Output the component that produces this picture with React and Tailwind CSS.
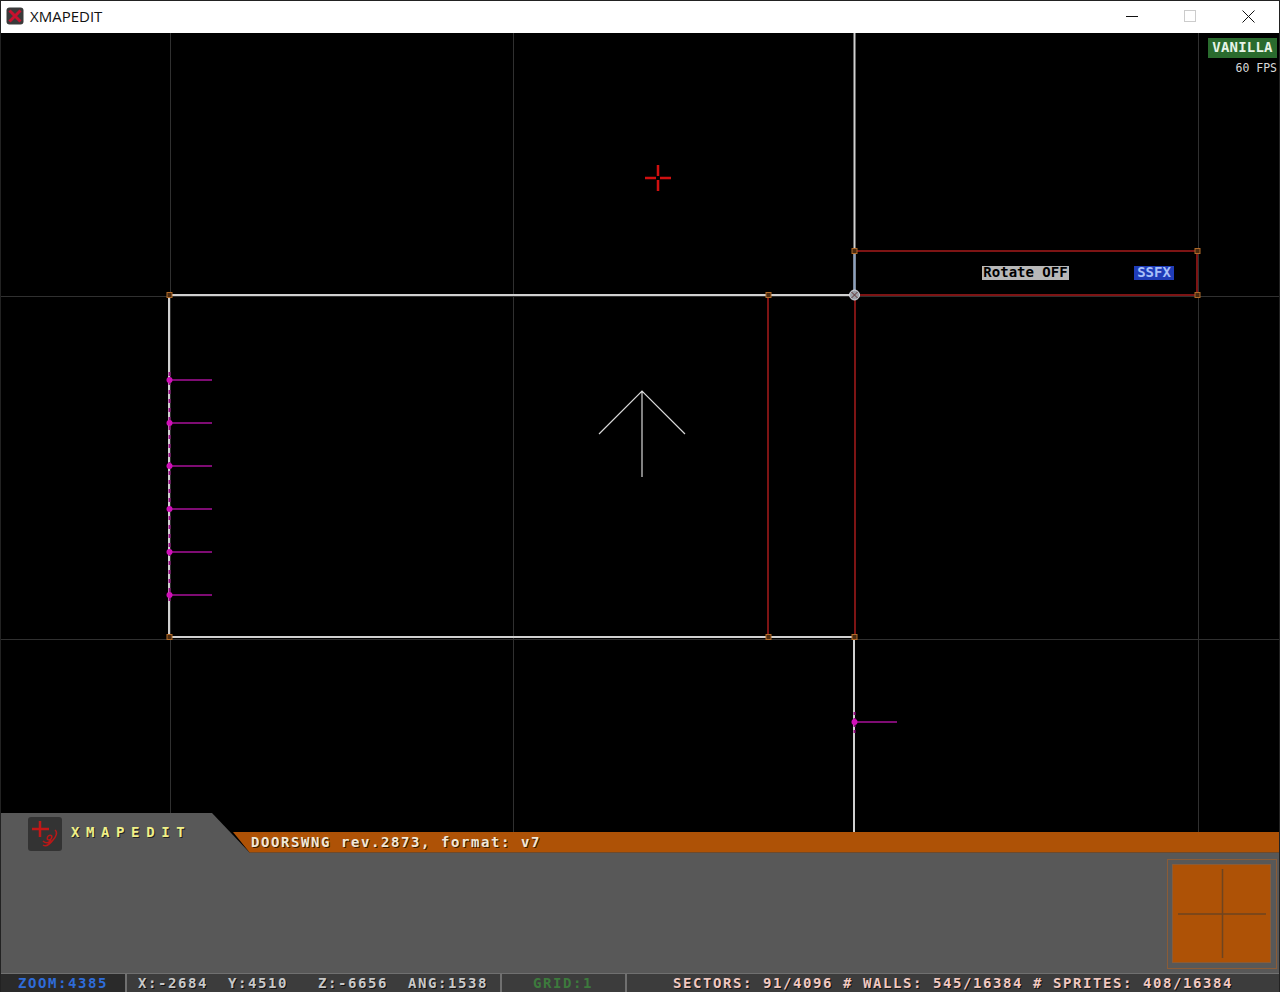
import React from 'react';

const pixelFont = "font-['DejaVu_Sans_Mono',monospace] font-bold";

const vertices = [
  [169, 295],
  [768, 295],
  [854, 251],
  [1197, 251],
  [1197, 295],
  [169, 637],
  [768, 637],
  [854, 637],
];

const markers = [
  [169, 380],
  [169, 423],
  [169, 466],
  [169, 509],
  [169, 552],
  [169, 595],
  [854, 722],
];

const MapDrawing = () => (
  <svg className="block w-full h-full" viewBox="1 33 1278 799">
    <g stroke="#303030" strokeWidth="1">
      <path d="M170.5 33V832M513.5 33V832M1198.5 33V832M0 296.5H1280M0 639.5H1280" fill="none" />
    </g>
    <g stroke="#d0d0d0" strokeWidth="2" fill="none">
      <path d="M169 295H854M169 295V637H854V832M854.5 33V295" />
    </g>
    <g stroke="#7d1414" strokeWidth="2" fill="none">
      <path d="M768 295V637M855 295V637M854 251H1197V295H854" />
    </g>
    <path d="M854.5 251V295" stroke="#8aa0c0" strokeWidth="2" />
    <path d="M642 477V391M599 434L642 391L685 434" stroke="#d8d8d8" strokeWidth="1.2" fill="none" />
    <path d="M645 178H656M660 178H671M658 165V176M658 180V191" stroke="#d01010" strokeWidth="2.5" fill="none" />
    <path d="M169.5 372V602" stroke="#9a1088" strokeWidth="2" strokeDasharray="4 5" fill="none" />
    <path d="M854.5 712V734" stroke="#9a1088" strokeWidth="2" strokeDasharray="3 3" fill="none" />
    {markers.map(([x, y]) => (
      <g key={y}>
        <path d={`M${x} ${y}H${x + 43}`} stroke="#a8109a" strokeWidth="1.5" />
        <circle cx={x + 0.5} cy={y} r="3" fill="#d010b8" />
      </g>
    ))}
    {vertices.map(([x, y]) => (
      <rect key={`${x}-${y}`} x={x - 2} y={y - 2.5} width="5" height="5" fill="#4a2a10" stroke="#b06a28" strokeWidth="1" />
    ))}
    <circle cx="854.5" cy="295" r="5" fill="#9aa0a8" stroke="#d8d8e0" strokeWidth="1" />
    <path d="M851.5 292L857.5 298M857.5 292L851.5 298" stroke="#603030" strokeWidth="1" />
  </svg>
);

const AppIcon = () => (
  <svg width="18" height="18" viewBox="0 0 18 18">
    <rect x="0.5" y="0.5" width="17" height="17" rx="3" fill="#3a3a3a" />
    <path d="M3.5 3.5L14.5 14.5M14.5 3.5L3.5 14.5" stroke="#c8102e" strokeWidth="3" />
  </svg>
);

const Logo = () => (
  <svg width="34" height="34" viewBox="0 0 34 34" className="rounded-[3px] bg-[#333333]">
    <path d="M4 12H21M12 4V20" stroke="#c01818" strokeWidth="2.5" fill="none" />
    <path
      d="M27 13C30 15 28 20 25 23C22 27 18 30 15 28M20 19C23 17 25 19 23 22C21 24 18 23 20 19M15 24C18 27 21 26 23 23"
      stroke="#b81818"
      strokeWidth="1.5"
      fill="none"
    />
  </svg>
);

const WindowButtons = () => (
  <div className="flex items-center h-full -translate-x-px -translate-y-px">
    <svg width="58" height="32" viewBox="0 0 58 32">
      <path d="M23 16.5H35" stroke="#111" strokeWidth="1" />
    </svg>
    <svg width="58" height="32" viewBox="0 0 58 32">
      <rect x="23.5" y="10.5" width="11" height="11" fill="none" stroke="#cccccc" strokeWidth="1" />
    </svg>
    <svg width="59" height="32" viewBox="0 0 59 32">
      <path d="M23.5 10.5L35.5 22.5M35.5 10.5L23.5 22.5" stroke="#111" strokeWidth="1" />
    </svg>
  </div>
);

const StatusCell = ({ className, children }) => (
  <div className={`h-full flex items-center ${pixelFont} text-[14px] tracking-[1.57px] whitespace-pre ${className}`}>
    {children}
  </div>
);

export default function App() {
  return (
    <div className="w-[1280px] h-[992px] flex flex-col bg-black border-x border-t border-[#222] overflow-hidden">
      <header className="h-8 shrink-0 bg-white flex items-center justify-between">
        <div className="flex items-center pl-[5px] gap-[6px] -translate-y-px">
          <AppIcon />
          <span className="font-['Open_Sans',sans-serif] text-[15px] text-[#111]">XMAPEDIT</span>
        </div>
        <WindowButtons />
      </header>

      <main className="relative h-[799px] shrink-0 bg-black">
        <MapDrawing />
        <div className="absolute top-[5px] right-[2px] flex flex-col items-end">
          <div className={`h-5 w-[69px] pb-[2px] flex items-center justify-center bg-[#2a6b2e] text-[#e8f4e8] text-[14px] tracking-[0.2px] ${pixelFont}`}>
            VANILLA
          </div>
          <div className="mt-[3px] font-['DejaVu_Sans_Mono',monospace] text-[11.5px] leading-[14px] text-[#d8d8d8]">60 FPS</div>
        </div>
        <div className={`absolute left-[981px] top-[233px] h-[14px] w-[87px] pb-[2px] flex items-center justify-center bg-[#b8b8b8] text-black text-[14px] ${pixelFont}`}>
          Rotate OFF
        </div>
        <div className={`absolute left-[1133px] top-[233px] h-[14px] w-[40px] pb-[2px] flex items-center justify-center bg-[#1f3cb8] text-[#a8c0f8] text-[14px] ${pixelFont}`}>
          SSFX
        </div>
      </main>

      <footer className="relative -mt-[19px] flex-1 flex flex-col">
        <div className="h-10 flex shrink-0">
          <div className="w-[249px] shrink-0 bg-[#585858] [clip-path:polygon(0_0,211px_0,100%_100%,0_100%)] flex items-start pl-[27px] pt-1 gap-[9px]">
            <Logo />
            <span className={`mt-[5px] text-[#f0f088] text-[14px] tracking-[6.6px] [text-shadow:1px_1px_0_#222] ${pixelFont}`}>XMAPEDIT</span>
          </div>
          <div className="-ml-[17px] mt-[19px] flex-1 bg-[#ae5206] border-b border-[#6e4a2c] [clip-path:polygon(0_0,100%_0,100%_100%,17px_100%)] pl-[18px] pt-px flex items-center">
            <span className={`text-[#f0e8d8] text-[14px] tracking-[1.57px] whitespace-pre [text-shadow:1px_1px_0_#3a1c00] ${pixelFont}`}>DOORSWNG rev.2873, format: v7</span>
          </div>
        </div>

        <div className="flex-1 bg-[#585858] flex justify-end pt-[6px] pr-[2px]">
          <div className="w-[110px] h-[110px] border border-[#8a5c38] pl-1 pt-1">
            <div className="w-[99px] h-[99px] border border-[#8a5c38] bg-[#ae5206] flex items-center justify-center">
              <svg width="97" height="97" viewBox="0 0 97 97">
                <path d="M5 49H93M49.5 4V93" stroke="#6e4420" strokeWidth="1.5" fill="none" />
              </svg>
            </div>
          </div>
        </div>

        <div className="h-[19px] shrink-0 bg-[#707070] pt-px flex gap-[2px]">
          <StatusCell className="w-[124px] justify-center bg-[#2a2a2a] text-[#2f6cd8]">ZOOM:4385</StatusCell>
          <StatusCell className="w-[373px] pl-[11px] bg-[#3c3c3c] text-[#c8c8c8] [text-shadow:1px_1px_0_#111]">
            <span>X:-2684</span>
            <span className="ml-[20px]">Y:4510</span>
            <span className="ml-[30px]">Z:-6656</span>
            <span className="ml-[20px]">ANG:1538</span>
          </StatusCell>
          <StatusCell className="w-[123px] pl-[31px] bg-[#3c3c3c] text-[#3d7a3d]">GRID:1</StatusCell>
          <StatusCell className="flex-1 pl-[46px] bg-[#3c3c3c] text-[#f0c8c0] [text-shadow:1px_1px_0_#111]">SECTORS: 91/4096 # WALLS: 545/16384 # SPRITES: 408/16384</StatusCell>
        </div>
      </footer>
    </div>
  );
}
